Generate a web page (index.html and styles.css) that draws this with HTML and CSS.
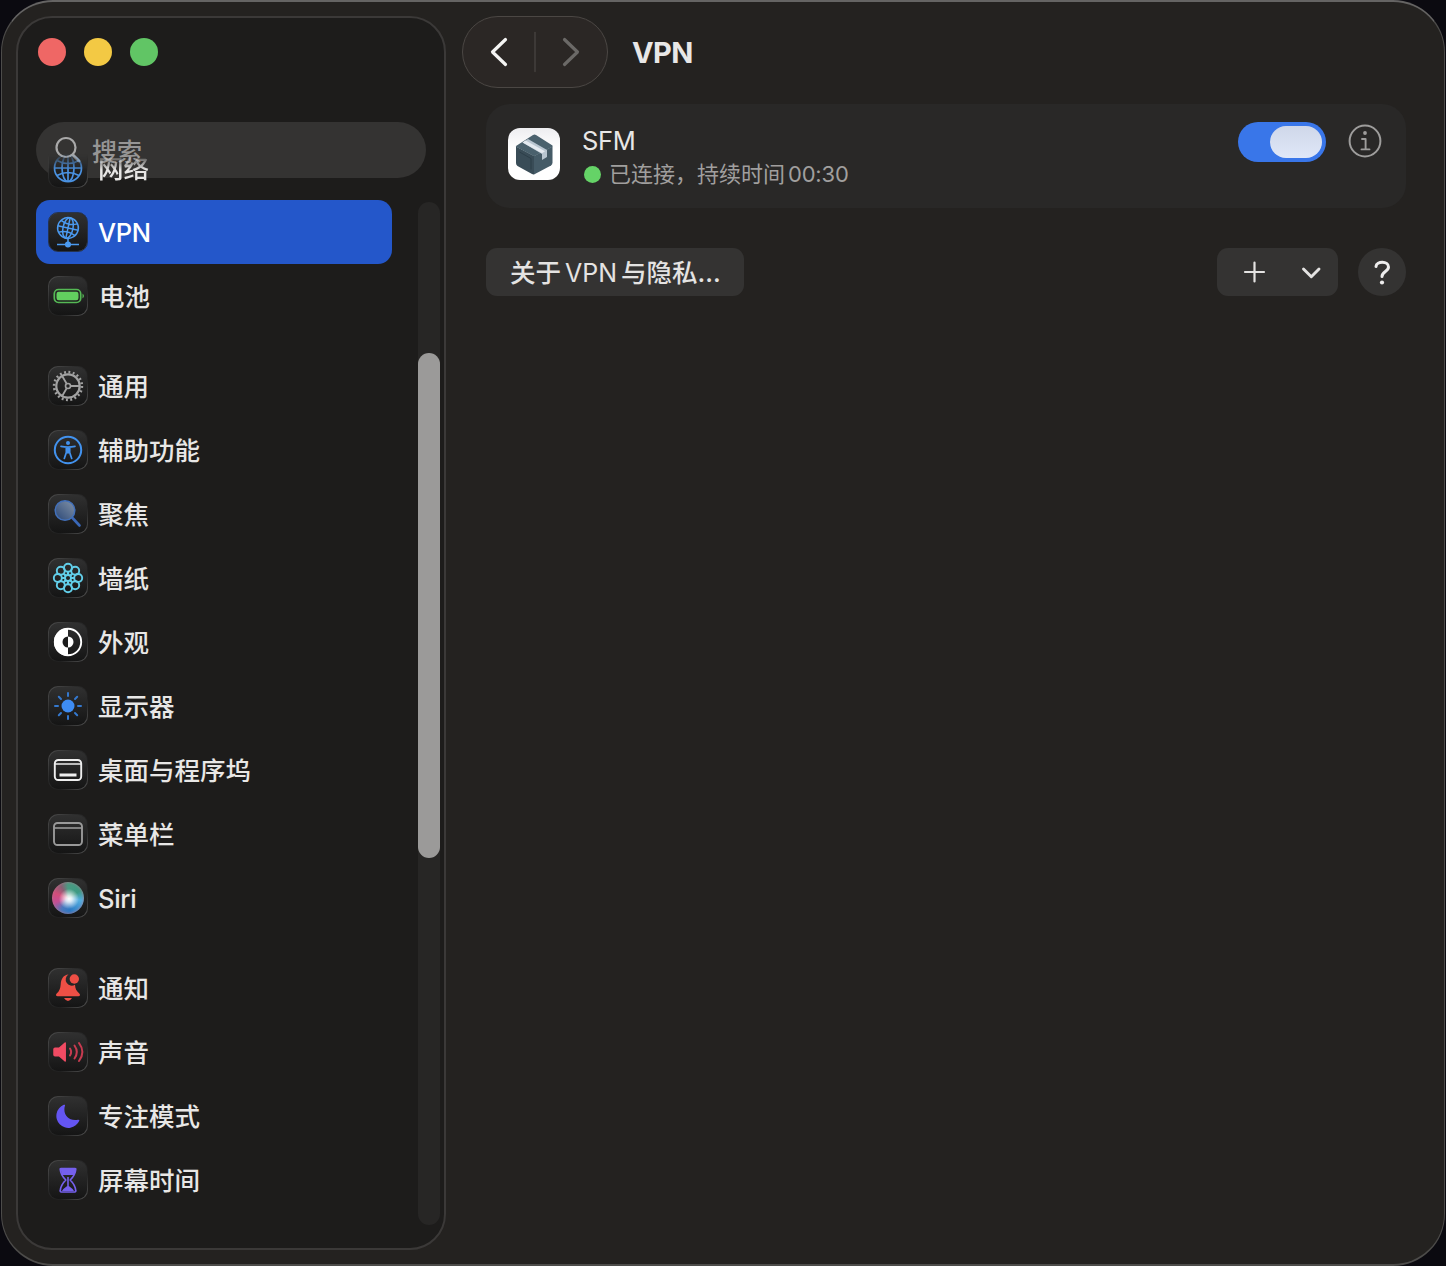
FILE: index.html
```html
<!DOCTYPE html>
<html lang="zh-CN">
<head>
<meta charset="utf-8">
<title>VPN</title>
<link rel="stylesheet" href="styles.css">
</head>
<body>
<div class="window">
  <aside class="sidebar">
    <div class="lights"><i class="light red"></i><i class="light yellow"></i><i class="light green"></i></div>
    <div class="search">
      <svg width="28" height="28" viewBox="0 0 28 28" fill="none" stroke="#a9a9a9" stroke-linecap="round"><circle cx="12" cy="11.500" r="9.500" stroke-width="2.200"/><path d="M19 19l6 6" stroke-width="3"/></svg>
      <span>搜索</span>
    </div>
    <div class="scroller">
      <nav class="list">
        <section class="group">
          <a class="row under"><span class="tile"><svg viewBox="0 0 40 40" fill="none" stroke="#4a92e2" stroke-width="1.700"><circle cx="20" cy="20" r="13.500"/><ellipse cx="20" cy="20" rx="6" ry="13.500"/><path d="M20 6.500v27M6.500 20h27M9 12.500q11 6 22 0M9 27.500q11-6 22 0"/></svg></span><span class="label">网络</span></a>
          <a class="row selected"><span class="tile"><svg viewBox="0 0 40 40" fill="none" stroke="#4b9af0" stroke-width="1.500"><g transform="rotate(12 20 16)"><circle cx="20" cy="16" r="10.400"/><ellipse cx="20" cy="16" rx="5" ry="10.400"/><path d="M20 5.600v20.800M9.600 16h20.800M11.700 10q8.300 4 16.600 0M11.700 22q8.300-4 16.600 0"/></g><path d="M20 26.500v4M9 32.500h22"/><circle cx="20" cy="32.500" r="2.300" fill="#4b9af0"/></svg></span><span class="label latin">VPN</span></a>
          <a class="row"><span class="tile"><svg viewBox="0 0 40 40"><rect x="6.300" y="13.500" width="26.400" height="13" rx="4.200" fill="none" stroke="#55b955" stroke-width="1.700"/><rect x="8.500" y="15.700" width="22" height="8.600" rx="2.200" fill="#62cf5f"/><path d="M34.500 17.500q3 2.500 0 5z" fill="#55b955"/></svg></span><span class="label nudge">电池</span></a>
        </section>
        <section class="group">
          <a class="row"><span class="tile"><svg viewBox="0 0 40 40" fill="none" stroke="#a2a2a2"><circle cx="20" cy="20" r="13.900" stroke-width="2.600" stroke-dasharray="1.900 2.467"/><circle cx="20" cy="20" r="11.700" stroke-width="2.200"/><circle cx="20" cy="20" r="2.500" stroke-width="1.600"/><path d="M22.500 20H32M18.700 17.800L14 9.700M18.700 22.200L14 30.300" stroke-width="1.800"/></svg></span><span class="label">通用</span></a>
          <a class="row"><span class="tile"><svg viewBox="0 0 40 40"><circle cx="20" cy="20" r="13.200" fill="none" stroke="#4292ee" stroke-width="2"/><circle cx="20" cy="13" r="2" fill="#4292ee"/><path d="M13 16.300q7 1.500 14 0M20 17v6M18.300 17.500v5l-2 6M21.700 17.500v5l2 6" fill="none" stroke="#4292ee" stroke-width="1.700" stroke-linecap="round"/></svg></span><span class="label">辅助功能</span></a>
          <a class="row"><span class="tile"><svg viewBox="0 0 40 40"><defs><linearGradient id="lens" x1="1" y1="0" x2="0" y2="1"><stop stop-color="#8494a8"/><stop offset="1" stop-color="#294676"/></linearGradient></defs><path d="M24.500 24l7 7.500" stroke="#3a68b8" stroke-width="2.600" stroke-linecap="round"/><circle cx="17" cy="16.500" r="9.800" fill="url(#lens)" stroke="#4270ba" stroke-width="1.500"/></svg></span><span class="label">聚焦</span></a>
          <a class="row"><span class="tile"><svg viewBox="0 0 40 40" fill="none" stroke="#62cfea" stroke-width="1.900"><circle cx="20" cy="9.800" r="4"/><circle cx="27.200" cy="12.800" r="4"/><circle cx="30.200" cy="20" r="4"/><circle cx="27.200" cy="27.200" r="4"/><circle cx="20" cy="30.200" r="4"/><circle cx="12.800" cy="27.200" r="4"/><circle cx="9.800" cy="20" r="4"/><circle cx="12.800" cy="12.800" r="4"/><circle cx="20" cy="20" r="3"/><path d="M20 14v3M20 23v3M14 20h3M23 20h3M15.700 15.700l2.200 2.200M24.300 15.700l-2.200 2.200M15.700 24.300l2.200-2.200M24.300 24.300l-2.200-2.200" stroke-width="2.200"/></svg></span><span class="label">墙纸</span></a>
          <a class="row"><span class="tile"><svg viewBox="0 0 40 40"><circle cx="20" cy="20" r="13.200" fill="none" stroke="#fff" stroke-width="1.900"/><path d="M20 6a14 14 0 0 0 0 28z" fill="#fff"/><path d="M20 14.500a5.500 5.500 0 0 0 0 11z" fill="#1c1c1c"/><path d="M20 14.500a5.500 5.500 0 0 1 0 11z" fill="#fff"/></svg></span><span class="label">外观</span></a>
          <a class="row"><span class="tile"><svg viewBox="0 0 40 40"><circle cx="20" cy="20" r="6.500" fill="#3e8cf2"/><path d="M20 7v3M20 30v3M7 20h3M30 20h3M10.800 10.800l2.200 2.200M27 27l2.200 2.200M29.200 10.800L27 13M13 27l-2.200 2.200" stroke="#3478ce" stroke-width="2" stroke-linecap="round"/></svg></span><span class="label">显示器</span></a>
          <a class="row"><span class="tile"><svg viewBox="0 0 40 40" fill="none" stroke="#eee"><rect x="6.800" y="10" width="26.400" height="20" rx="3.500" stroke-width="1.900"/><path d="M7 14h26" stroke-width="1.500"/><path d="M11.500 25h17" stroke-width="3"/></svg></span><span class="label">桌面与程序坞</span></a>
          <a class="row"><span class="tile"><svg viewBox="0 0 40 40" fill="none" stroke="#999"><rect x="6" y="9" width="28" height="22" rx="3.500" stroke-width="1.900"/><path d="M6 14h28" stroke-width="1.600"/></svg></span><span class="label">菜单栏</span></a>
          <a class="row"><span class="tile"><i class="siri"></i></span><span class="label latin">Siri</span></a>
        </section>
        <section class="group">
          <a class="row"><span class="tile"><svg viewBox="0 0 40 40" fill="#ee4f45"><path d="M20.500 6.500a5.800 5.800 0 0 0 6.500 10.200c.3 4 1.300 6.100 4.300 8.800 1.300 1.300.8 2.700-1 2.700H9.700c-1.800 0-2.300-1.400-1-2.700 2.700-2.600 3.700-5 4-9.100.3-5.700 2.800-9.400 7.800-9.900zM16 30h8q-4 6.200-8 0z"/><circle cx="26.300" cy="11" r="4.700"/></svg></span><span class="label">通知</span></a>
          <a class="row"><span class="tile"><svg viewBox="0 0 40 40" fill="none" stroke="#c83b50" stroke-width="2" stroke-linecap="round"><path d="M7 16.300h4.200l6-5.300v18l-6-5.300H7q-1 0-1-1v-5.400q0-1 1-1z" fill="#f04b63" stroke="#f04b63" stroke-width="1.500" stroke-linejoin="round"/><path d="M22 16.500q2.300 3.500 0 7M26.500 13.500q4.600 6.500 0 13M31 11q6.800 9 0 18"/></svg></span><span class="label">声音</span></a>
          <a class="row"><span class="tile"><svg viewBox="0 0 40 40"><path d="M17 9.500c-2.700 8.500 3.600 16.200 13 14.200.8-.2 1.700.2 1.300 1.100a12 12 0 1 1-15.500-16c.9-.3 1.500-.1 1.200.7z" fill="#6455f2"/></svg></span><span class="label">专注模式</span></a>
          <a class="row"><span class="tile"><svg viewBox="0 0 40 40" fill="none" stroke="#7560ed" stroke-width="1.700" stroke-linejoin="round"><path d="M13 8.500h14q1 0 .7 1c-.3 4.500-2 7-5.500 10.500 3.500 3.500 5.200 6 5.500 10.500q.3 1.500-1 1.500H13.300q-1.300 0-1-1.500c.3-4.500 2-7 5.500-10.500-3.500-3.500-5.200-6-5.500-10.500q-.3-1 .7-1z"/><path d="M12.700 9h14.600v4l-1 2H13.800zM14 31q1-2.200 5.200-5V17h1.600v9q4.200 2.800 5.200 5z" fill="#7560ed" stroke="none"/></svg></span><span class="label">屏幕时间</span></a>
        </section>
      </nav>
      <div class="track"><div class="thumb"></div></div>
    </div>
  </aside>
  <main class="content">
    <header class="toolbar">
      <div class="history">
        <svg width="144" height="70" viewBox="0 0 144 70" fill="none" stroke-linecap="round" stroke-linejoin="round"><path d="M42.500 22.500L29.500 35l13 12.500" stroke="#f4f4f3" stroke-width="3.200"/><path d="M72 15.500v39" stroke="#45413e" stroke-width="1.500"/><path d="M101.500 22.500l13 12.500-13 12.500" stroke="#6b6967" stroke-width="3.200"/></svg>
      </div>
      <h1>VPN</h1>
    </header>
    <section class="card">
      <div class="app-icon"><svg width="52" height="52" viewBox="0 0 52 52"><path d="M8 18.500L26 28v18.500q-1 .2-2-.4L9.500 38Q8 37 8 35z" fill="#394c57"/><path d="M44.500 18.500L26 28v18.500l17-9q1.500-1 1.500-3z" fill="#455b67"/><path d="M8 18L25 7q1.500-.8 3 0l16.500 10.500q.5 1-.5 1.500L26 28.300 8.500 19q-1-.5-.5-1z" fill="#4a616d"/><path d="M14.500 14.500l5.500-3.500L39 22v7l-5 3v-6z" fill="#b9c6d1"/><path d="M14.500 14.500l3-2L37 23.300l-3 2z" fill="#e4eaf0"/><path d="M11.500 24L23 30.500v11" fill="none" stroke="#2d3f49" stroke-width="1"/></svg></div>
      <div class="info">
        <div class="name">SFM</div>
        <div class="status"><i class="dot"></i><span>已连接，持续时间</span><span class="time">00:30</span></div>
      </div>
      <div class="switch"><i class="knob"></i></div>
      <svg class="detail" width="34" height="34" viewBox="0 0 34 34" fill="none" stroke="#9e9d9c"><circle cx="17" cy="17" r="15.400" stroke-width="2"/><circle cx="17" cy="9" r="1.900" fill="#9e9d9c" stroke="none"/><path d="M14 15h3.600v10M13.500 25.400h8" stroke-width="1.900" stroke-linecap="round" stroke-linejoin="round"/></svg>
    </section>
    <footer class="actions">
      <button class="button about"><span>关于</span><span class="en">VPN</span><span>与隐私</span><span>...</span></button>
      <button class="button add"><svg width="121" height="48" viewBox="0 0 121 48" fill="none" stroke="#e4e3e2" stroke-linecap="round" stroke-linejoin="round"><path d="M28 24h19M37.500 14.500v19" stroke-width="2.200"/><path d="M86.500 21l7.800 7.800 7.700-7.800" stroke-width="2.900"/></svg></button>
      <button class="button help"><svg width="48" height="48" viewBox="0 0 48 48" fill="none" stroke="#eeeded" stroke-width="3" stroke-linecap="round" stroke-linejoin="round"><path d="M18 18.500c.5-5.500 12.500-5.700 12.500.5 0 4.500-6.500 4.500-6.500 9.500"/><circle cx="24" cy="34.500" r="2.100" fill="#eeeded" stroke="none"/></svg></button>
    </footer>
  </main>
</div>
</body>
</html>
```
FILE: styles.css
```css
* { box-sizing: border-box; }

body {
  margin: 0;
  height: 1266px;
  padding: 0 1px;
  overflow: hidden;
  background: #0b0a10;
  font-family: Inter, "Noto Sans CJK SC", sans-serif;
  color: #e8e7e6;
}

.window {
  display: flex;
  height: 1266px;
  padding: 14px 38px 15px 14px;
  border: 1px solid #4d4c4a;
  border-top: 2px solid #656463;
  border-bottom-width: 2px;
  border-radius: 52px;
  background: #242220;
}

.sidebar {
  position: relative;
  flex: none;
  width: 430px;
  height: 1234px;
  border: 2px solid #3b3938;
  border-radius: 36px;
  background: #1d1c1b;
}

.lights { display: flex; gap: 18px; height: 104px; padding: 20px 0 0 20px; }
.light { width: 28px; height: 28px; border-radius: 50%; }
.red { background: #ef6765; }
.yellow { background: #f3c944; }
.green { background: #61c565; }

/* The search field floats over the scrolling list. */
.search {
  position: absolute;
  top: 104px;
  left: 18px;
  display: flex;
  align-items: center;
  gap: 10px;
  width: 390px;
  height: 56px;
  padding-left: 18px;
  border-radius: 28px;
  background: #343332;
  color: #969595;
  font-size: 25px;
  font-weight: 500;
}

.scroller {
  position: relative;
  display: flex;
  justify-content: space-between;
  height: 1103px;
  padding: 0 4px 0 18px;
}

.list { display: flex; flex-direction: column; gap: 26px; width: 356px; padding-top: 14px; }
.row { display: flex; align-items: center; gap: 10px; height: 64px; padding-left: 12px; border-radius: 14px; }
.row.selected { background: #2457ca; color: #fff; }
.row.under {
  -webkit-mask-image: linear-gradient(transparent 18px, #000 34px);
  mask-image: linear-gradient(transparent 18px, #000 34px);
}

.tile {
  flex: none;
  width: 40px;
  height: 40px;
  padding: 1px;
  border: 1px solid transparent;
  border-radius: 10px;
  background:
    linear-gradient(#303030, #151515) padding-box,
    linear-gradient(135deg, #505050, #2b2b2b 35%, #202020 65%, #555) border-box;
}
.tile svg { display: block; width: 40px; height: 40px; margin: -2px; }
.selected .tile { border-color: #25334f; }

.siri {
  display: block;
  width: 32px;
  height: 32px;
  margin: 2px;
  border-radius: 50%;
  background:
    radial-gradient(circle at 53% 53%, #fff 0, #ffffffcc 13%, transparent 42%),
    conic-gradient(from 0deg, #4a9b82, #3d9a83 60deg, #54aee0 100deg, #2c79c4 170deg, #4c78bd 210deg, #c34f95 250deg, #d34d7a 290deg, #886074 330deg, #4a9b82);
  box-shadow: inset 0 0 2px 1px #b3778b88;
}

.label { padding-top: 2px; font-size: 25.500px; font-weight: 500; line-height: 38px; white-space: nowrap; }
.label.latin { letter-spacing: -0.300px; }
.nudge { padding-left: 1px; }

.track { width: 22px; height: 1023px; margin-top: 80px; padding-top: 151px; border-radius: 11px; background: #272625; }
.thumb { height: 505px; border-radius: 11px; background: #9b9a99; }

.content { flex: 1; min-width: 0; padding-left: 16px; }
.toolbar { display: flex; align-items: center; gap: 24px; height: 72px; }
.history { width: 146px; height: 72px; border: 1px solid #4b4744; border-radius: 36px; background: #2b2725; }
.history svg { display: block; }
h1 { margin: 0; font-size: 29px; font-weight: 700; letter-spacing: -0.600px; }

.card {
  display: flex;
  align-items: flex-start;
  height: 104px;
  margin: 16px 0 40px 24px;
  padding: 18px 24px 0 22px;
  border-radius: 24px;
  background: #292827;
}
.app-icon { width: 52px; height: 52px; margin-top: 6px; border-radius: 12px; background: linear-gradient(#ededf0, #fff 40%); }
.app-icon svg { display: block; }
.info { flex: 1; padding-left: 22px; }
.name { height: 36px; font-size: 25.500px; line-height: 38px; letter-spacing: -0.300px; }
.status { display: flex; align-items: center; height: 32px; padding-left: 2px; font-size: 22px; line-height: 32px; color: #a09f9e; white-space: nowrap; }
.dot { width: 17px; height: 17px; margin-right: 8px; border-radius: 50%; background: #65d367; }
.time { margin-left: 3px; letter-spacing: -0.200px; }
.switch { width: 88px; height: 40px; padding: 4px; border-radius: 20px; background: #3976e9; }
.knob { display: block; width: 52px; height: 32px; margin-left: 28px; border-radius: 16px; background: linear-gradient(#cfd7e9, #dfe7f8); }
.detail { margin: 2px 0 0 22px; }

.actions { display: flex; margin-left: 24px; }
.button { display: flex; align-items: center; height: 48px; padding: 0; border: 0; border-radius: 11px; background: #343332; color: #e4e3e2; font: 25.500px/38px Inter, "Noto Sans CJK SC", sans-serif; }
.about { width: 258px; padding: 1px 0 0 24px; margin-right: auto; font-weight: 500; }
.en { margin: 0 4px; font-size: 25px; font-weight: 400; }
.help { width: 48px; margin-left: 20px; border-radius: 50%; }
```
